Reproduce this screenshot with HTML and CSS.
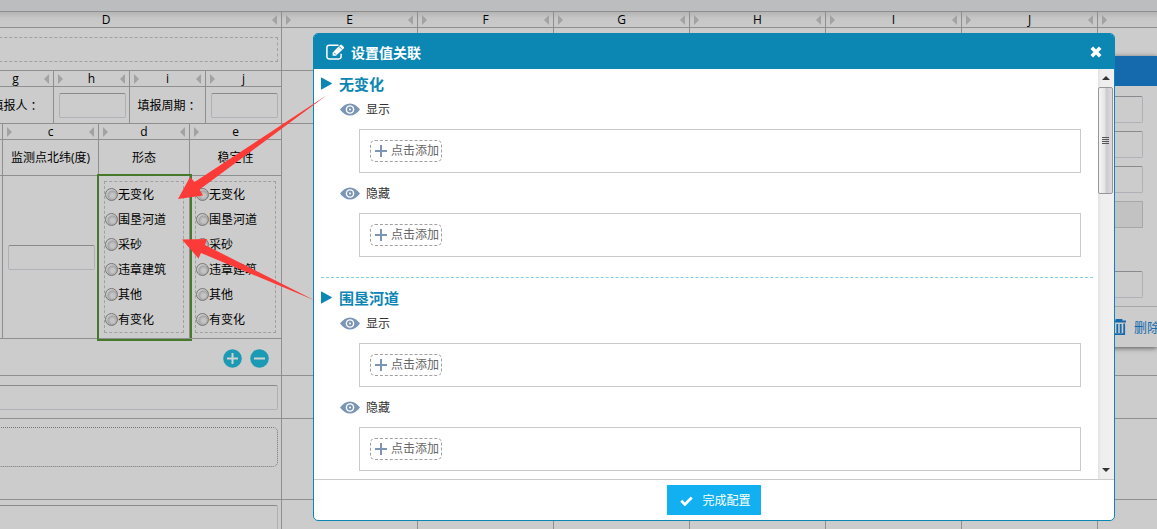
FILE: index.html
```html
<!DOCTYPE html>
<html lang="zh-CN">
<head>
<meta charset="utf-8">
<title>设置值关联</title>
<link rel="stylesheet" href="styles.css">
</head>
<body>
<div class="toolbar"></div>
<main class="sheet">
  <div class="col-head">D</div>
  <div class="col-head">E</div>
  <div class="col-head">F</div>
  <div class="col-head">G</div>
  <div class="col-head">H</div>
  <div class="col-head">I</div>
  <div class="col-head">J</div>
  <div class="col-head last"></div>

  <div class="cell padded"><div class="drop-zone"></div></div>
  <div class="cell"></div><div class="cell"></div><div class="cell"></div><div class="cell"></div><div class="cell"></div><div class="cell"></div><div class="cell last"></div>

  <div class="cell">
    <div class="info-grid">
      <div class="col-head"></div>
      <div class="col-head">g</div>
      <div class="col-head">h</div>
      <div class="col-head">i</div>
      <div class="col-head end">j</div>
      <div class="sub-cell"></div>
      <label class="sub-cell caption low" for="reporter">填报人<span class="colon">：</span></label>
      <div class="sub-cell field"><input class="box" id="reporter" type="text"></div>
      <label class="sub-cell caption low" for="period">填报周期<span class="colon">：</span></label>
      <div class="sub-cell field end"><input class="box" id="period" type="text"></div>
    </div>
  </div>
  <div class="cell"></div><div class="cell"></div><div class="cell"></div><div class="cell"></div><div class="cell"></div><div class="cell"></div><div class="cell last"></div>

  <div class="cell">
    <div class="point-grid">
      <div class="col-head"></div>
      <div class="col-head">c</div>
      <div class="col-head">d</div>
      <div class="col-head end">e</div>
      <div class="sub-cell ruled"></div>
      <div class="sub-cell ruled caption">监测点北纬(度)</div>
      <div class="sub-cell ruled caption">形态</div>
      <div class="sub-cell ruled caption end">稳定性</div>
      <div class="sub-cell ruled"></div>
      <div class="sub-cell ruled middle"><input class="box" type="text" aria-label="监测点北纬(度)"></div>
      <div class="sub-cell ruled choice selected">
        <div class="choices">
          <label><input type="radio" name="form">无变化</label>
          <label><input type="radio" name="form">围垦河道</label>
          <label><input type="radio" name="form">采砂</label>
          <label><input type="radio" name="form">违章建筑</label>
          <label><input type="radio" name="form">其他</label>
          <label><input type="radio" name="form">有变化</label>
        </div>
      </div>
      <div class="sub-cell ruled choice end">
        <div class="choices">
          <label><input type="radio" name="stability">无变化</label>
          <label><input type="radio" name="stability">围垦河道</label>
          <label><input type="radio" name="stability">采砂</label>
          <label><input type="radio" name="stability">违章建筑</label>
          <label><input type="radio" name="stability">其他</label>
          <label><input type="radio" name="stability">有变化</label>
        </div>
      </div>
    </div>
    <div class="row-tools">
      <button class="round" type="button" aria-label="添加行"><svg viewBox="0 0 19 19"><circle cx="9.500" cy="9.500" r="9.300"/><path d="M9.500 4v11M4 9.500h11"/></svg></button>
      <button class="round" type="button" aria-label="删除行"><svg viewBox="0 0 19 19"><circle cx="9.500" cy="9.500" r="9.300"/><path d="M4 9.500h11"/></svg></button>
    </div>
  </div>
  <div class="cell"></div><div class="cell"></div><div class="cell"></div><div class="cell"></div><div class="cell"></div><div class="cell"></div><div class="cell last"></div>

  <div class="cell padded"><input class="box" type="text" aria-label="内容"></div>
  <div class="cell"></div><div class="cell"></div><div class="cell"></div><div class="cell"></div><div class="cell"></div><div class="cell"></div><div class="cell last"></div>

  <div class="cell upload"><div class="upload-zone"></div></div>
  <div class="cell"></div><div class="cell"></div><div class="cell"></div><div class="cell"></div><div class="cell"></div><div class="cell"></div><div class="cell last"></div>

  <div class="cell bottom"><input class="box" type="text" aria-label="备注"></div>
  <div class="cell"></div><div class="cell"></div><div class="cell"></div><div class="cell"></div><div class="cell"></div><div class="cell"></div><div class="cell last"></div>
</main>

<aside class="panel">
  <div class="panel-head"></div>
  <div class="panel-body">
    <input class="box" type="text" aria-label="属性一">
    <input class="box" type="text" aria-label="属性二">
    <input class="box" type="text" aria-label="属性三">
    <input class="box" type="text" aria-label="属性四" disabled>
    <input class="box spaced" type="text" aria-label="属性五">
  </div>
  <div class="panel-foot">
    <button class="remove" type="button"><svg viewBox="0 0 14 16"><path d="M0 2.500h14M4.500 2V.8h5V2M1.800 4.500v10.700h10.400V4.500M5.300 5v9M8.700 5v9" fill="none" stroke="currentColor" stroke-width="1.800"/></svg>删除</button>
  </div>
</aside>

<section class="dialog" role="dialog" aria-labelledby="dialog-title">
  <header class="dialog-head">
    <svg class="edit" viewBox="0 0 19 16"><path d="M12.500 1.300H3.200Q.9 1.300.9 3.600v9Q.9 14.900 3.200 14.900h9.600q2.300 0 2.300-2.300V9.800" fill="none" stroke="#fff" stroke-width="1.500"/><path d="M6.600 11.700V8.500L14.200.9Q15 .1 15.800.9l1.900 1.900q.8.8 0 1.600L10 11.700z" fill="#fff"/><path d="M13 2.300l3.200 3.200M8 8.600l2 2" stroke="#0c86b3" stroke-width=".9"/></svg>
    <h1 id="dialog-title">设置值关联</h1>
    <button class="close" type="button" aria-label="关闭"><svg viewBox="0 0 12 12"><path d="M1.800 1.800l8.400 8.400M10.200 1.800l-8.400 8.400" stroke="#fff" stroke-width="3.600"/></svg></button>
  </header>
  <div class="dialog-body">
    <div class="groups">
      <section class="group">
        <h2><svg class="arrow" viewBox="0 0 11 12"><path d="M0 .6Q0-.2 1 .2L10.500 5.400q.8.600 0 1.200L1 11.800q-1 .4-1-.4z"/></svg>无变化</h2>
        <h3><svg class="eye" viewBox="0 0 20 12"><path class="lid" d="M0 6Q4.500 0 10 0t10 6q-4.500 6-10 6T0 6z"/><circle class="white" cx="10" cy="6" r="4.300"/><circle class="lid" cx="10" cy="6" r="2.900"/><circle class="white" cx="10" cy="6" r="1"/></svg>显示</h3>
        <div class="targets"><button class="add" type="button"><svg viewBox="0 0 12 12"><path d="M6 0v12M0 6h12"/></svg>点击添加</button></div>
        <h3><svg class="eye" viewBox="0 0 20 12"><path class="lid" d="M0 6Q4.500 0 10 0t10 6q-4.500 6-10 6T0 6z"/><circle class="white" cx="10" cy="6" r="4.300"/><circle class="lid" cx="10" cy="6" r="2.900"/><circle class="white" cx="10" cy="6" r="1"/></svg>隐藏</h3>
        <div class="targets"><button class="add" type="button"><svg viewBox="0 0 12 12"><path d="M6 0v12M0 6h12"/></svg>点击添加</button></div>
      </section>
      <section class="group">
        <h2><svg class="arrow" viewBox="0 0 11 12"><path d="M0 .6Q0-.2 1 .2L10.500 5.400q.8.600 0 1.200L1 11.800q-1 .4-1-.4z"/></svg>围垦河道</h2>
        <h3><svg class="eye" viewBox="0 0 20 12"><path class="lid" d="M0 6Q4.500 0 10 0t10 6q-4.500 6-10 6T0 6z"/><circle class="white" cx="10" cy="6" r="4.300"/><circle class="lid" cx="10" cy="6" r="2.900"/><circle class="white" cx="10" cy="6" r="1"/></svg>显示</h3>
        <div class="targets"><button class="add" type="button"><svg viewBox="0 0 12 12"><path d="M6 0v12M0 6h12"/></svg>点击添加</button></div>
        <h3><svg class="eye" viewBox="0 0 20 12"><path class="lid" d="M0 6Q4.500 0 10 0t10 6q-4.500 6-10 6T0 6z"/><circle class="white" cx="10" cy="6" r="4.300"/><circle class="lid" cx="10" cy="6" r="2.900"/><circle class="white" cx="10" cy="6" r="1"/></svg>隐藏</h3>
        <div class="targets"><button class="add" type="button"><svg viewBox="0 0 12 12"><path d="M6 0v12M0 6h12"/></svg>点击添加</button></div>
      </section>
    </div>
    <div class="scrollbar" aria-hidden="true">
      <span class="step up"></span>
      <span class="thumb"><i></i><i></i><i></i><i></i></span>
      <span class="step down"></span>
    </div>
  </div>
  <footer class="dialog-foot">
    <button class="done" type="button"><svg viewBox="0 0 13 10"><path d="M1.300 4.800l3.600 3.600L11.700 1.500" fill="none" stroke="#fff" stroke-width="2.800"/></svg>完成配置</button>
  </footer>
</section>

<svg class="pointers" aria-hidden="true">
  <polygon points="178,199 190,177 194.600,182 327,95 199.600,189.500 203,195.500"/>
  <polygon points="182,239.500 207,239 205,245 315,300.500 201,253 198.500,258.500"/>
</svg>
</body>
</html>
```
FILE: styles.css
```css
* { box-sizing: border-box; }

body {
  margin: 0;
  height: 100vh;
  overflow: hidden;
  position: relative;
  display: flex;
  flex-direction: column;
  background: #cccccc;
  color: #000;
  font: 12px/16px "Open Sans", "Noto Sans CJK SC", sans-serif;
}

button, input { font: inherit; margin: 0; }
button { border: 0; padding: 0; background: none; color: inherit; }
svg { display: block; flex: none; }

.toolbar {
  flex: none;
  height: 12px;
  background: #bcbdbf;
  border-bottom: 1px solid #8f8f8f;
}

.sheet {
  flex: 1;
  margin-left: -69px;
  display: grid;
  grid-template-columns: 351px repeat(6, 136px) 1fr;
  grid-template-rows: repeat(6, auto) 1fr;
}

.cell {
  min-width: 0;
  border-right: 1px solid #8f8f8f;
  border-bottom: 1px solid #8f8f8f;
}
.last, .end { border-right: 0; }

.col-head {
  display: flex;
  align-items: center;
  justify-content: space-between;
  height: 16px;
  padding: 0 4px;
  line-height: 15px;
  border-right: 1px solid #8f8f8f;
  border-bottom: 1px solid #8f8f8f;
}
.sheet > .col-head { background: linear-gradient(#b4b4b4, #c6c6c6 6px, #cacaca); }
.cell .col-head { line-height: 17px; }
.col-head.last, .col-head.end { border-right: 0; }
.col-head::before, .col-head::after {
  content: "";
  border: 5px solid transparent;
}
.col-head::before { border-left-color: #a2a2a2; border-right: 0; }
.col-head::after { border-right-color: #a2a2a2; border-left: 0; }
.col-head.last::after, .col-head.end::after { border-right-color: transparent; }

.padded { padding: 9px 3px 8px; }
.upload { padding: 8px 3px 32px; }
.bottom { padding: 5px 3px; }

.drop-zone { height: 25px; border: 1px dashed #a0a0a0; }
.upload-zone { height: 40px; border: 1px dotted #777; border-radius: 5px; }

.box {
  display: block;
  width: 100%;
  height: 25px;
  padding: 0 4px;
  background: transparent;
  border: 1px solid #b0b0b8;
  border-top-color: #8a8a8e;
  border-radius: 2px;
}

.info-grid {
  display: grid;
  grid-template-columns: 1fr 76px 76px 76px 75px;
}
.point-grid {
  display: grid;
  grid-template-columns: 1fr 96px 91px 91px;
}
.sub-cell { border-right: 1px solid #8f8f8f; }
.sub-cell.end { border-right: 0; }
.ruled { border-bottom: 1px solid #8f8f8f; }
.caption {
  display: flex;
  align-items: center;
  justify-content: center;
  min-height: 36px;
  white-space: nowrap;
}
.low { padding-top: 2px; }
.colon { font-family: "Noto Sans CJK TC", sans-serif; }
.field { padding: 6px 3px 5px 5px; }
.middle { display: flex; align-items: center; padding: 0 3px 0 5px; }

.choice { padding: 5px; }
.selected { outline: 2px solid #47792a; }
.choices { border: 1px dashed #a0a0a0; }
.choices label { display: flex; align-items: center; height: 25px; }
.choices input {
  appearance: none;
  width: 13px;
  height: 13px;
  border: 1px solid #777;
  border-radius: 50%;
  background: radial-gradient(circle at 60% 60%, #c4c4c4 20%, #a4a4a4 50%, #c8c8c8 62%);
}

.row-tools {
  display: flex;
  justify-content: flex-end;
  gap: 8px;
  padding: 10px 12px 7px;
}
.round svg { width: 19px; height: 19px; }
.round circle { fill: #1b9ab5; }
.round path { stroke: #d2d2d2; stroke-width: 2; }

.panel {
  position: absolute;
  top: 56px;
  right: 0;
  width: 260px;
  background: #cccccc;
  box-shadow: 0 1px 5px #555;
}
.panel-head { height: 30px; background: #146aac; }
.panel-body {
  display: flex;
  flex-direction: column;
  gap: 8px;
  padding: 10px 14px 8px 60px;
}
.panel-body .box { height: 27px; }
.panel-body .box:disabled { background: #c2c2c2; border-color: #a8a8a8; border-radius: 0; }
.panel-body .spaced { margin-top: 35px; }
.panel-foot { border-top: 1px solid #a6a6a6; padding: 10px 0 10px 215px; }
.remove {
  display: flex;
  align-items: center;
  gap: 8px;
  height: 20px;
  color: #146aac;
  font-size: 13px;
  white-space: nowrap;
}
.remove svg { width: 14px; height: 16px; }

.dialog {
  position: absolute;
  inset: 33px 42px 8px 313px;
  display: flex;
  flex-direction: column;
  overflow: hidden;
  background: #fff;
  border: 1px solid #0c86b3;
  border-radius: 5px;
  color: #333;
}
.dialog-head {
  display: flex;
  align-items: center;
  gap: 6px;
  height: 35px;
  padding: 0 12px;
  background: #0c86b3;
  color: #fff;
}
.dialog-head h1 { flex: 1; margin: 0; padding-top: 3px; font-size: 14px; line-height: 20px; }
.edit { width: 19px; height: 16px; }
.close svg { width: 12px; height: 12px; }

.dialog-body { flex: 1; min-height: 0; display: flex; }
.groups { flex: 1; overflow: hidden; padding: 0 5px 0 7px; }
.group { padding: 8px 0 20px; border-bottom: 1px dashed #7fcfe6; }
.group:first-child { padding-top: 3px; }
.group:last-child { border-bottom: 0; }
.group h2 {
  display: flex;
  align-items: center;
  gap: 7px;
  height: 25px;
  margin: 0;
  padding-bottom: 2px;
  color: #0c86b3;
  font-size: 15px;
}
.arrow { width: 11px; height: 13px; fill: #0c86b3; }
.group h3 {
  display: flex;
  align-items: center;
  gap: 6px;
  height: 25px;
  margin: 0 0 7px 19px;
  font-size: 12px;
  font-weight: normal;
}
.eye { width: 20px; height: 13px; }
.lid { fill: #7b95b5; }
.white { fill: #fff; }
.targets {
  margin: 0 12px 8px 38px;
  padding: 10px;
  border: 1px solid #cacaca;
}
.targets:last-child { margin-bottom: 0; }
.add {
  display: flex;
  align-items: center;
  gap: 4px;
  height: 22px;
  padding: 0 2px 0 4px;
  border: 1px dashed #a0a0a0;
  border-radius: 5px;
  color: #666;
}
.add svg { width: 12px; height: 12px; }
.add path { stroke: #7b95b5; stroke-width: 2; }

.scrollbar {
  display: flex;
  flex-direction: column;
  width: 16px;
  background: linear-gradient(90deg, #e2e2e2, #eeeeee 3px, #f0f0f0);
}
.step { height: 18px; display: flex; align-items: center; justify-content: center; }
.step::before { content: ""; border: 4px solid transparent; }
.up::before { border-bottom-color: #333; border-top: 0; }
.down { margin-top: auto; }
.down::before { border-top-color: #333; border-bottom: 0; }
.thumb {
  display: flex;
  flex-direction: column;
  align-items: center;
  justify-content: center;
  gap: 1px;
  height: 107px;
  margin-right: 1px;
  border: 1px solid #979797;
  border-radius: 2px;
  background: linear-gradient(90deg, #f4f4f4, #e4e4e6 45%, #cbcbcf 55%, #dcdcdf);
}
.thumb i { width: 7px; height: 1px; background: #555; }

.dialog-foot {
  display: flex;
  justify-content: center;
  padding: 5px 0;
  border-top: 1px solid #cacaca;
}
.done {
  display: flex;
  align-items: center;
  gap: 9px;
  height: 30px;
  padding: 1px 10px 0 13px;
  background: #12b0f0;
  color: #fff;
}
.done svg { width: 13px; height: 10px; }

.pointers {
  position: absolute;
  inset: 0;
  width: 100%;
  height: 100%;
  pointer-events: none;
  fill: #fc3b38;
}
```
